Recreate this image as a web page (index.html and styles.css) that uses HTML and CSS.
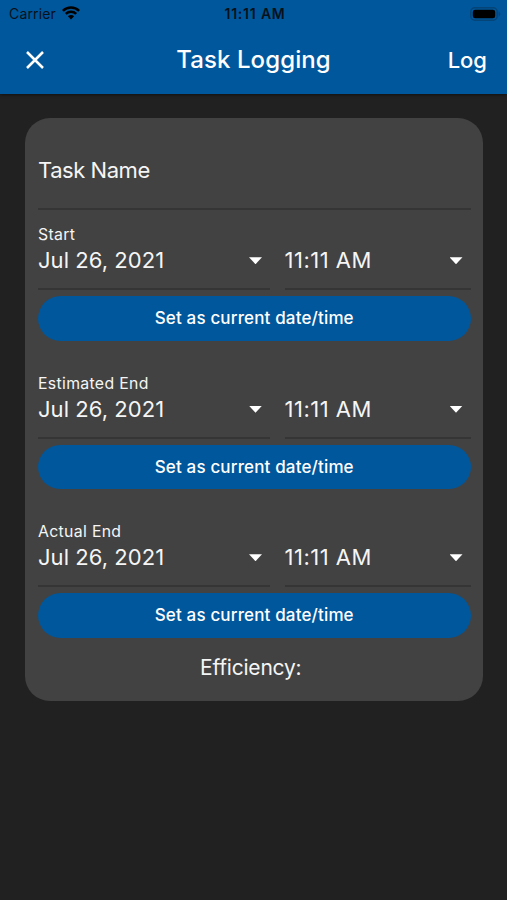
FILE: index.html
```html
<!DOCTYPE html>
<html lang="en">
<head>
<meta charset="utf-8">
<title>Task Logging</title>
<link rel="stylesheet" href="styles.css">
</head>
<body>
<header class="app-bar">
  <div class="status">
    <div class="carrier"><span>Carrier</span>
      <svg width="18" height="14" viewBox="0 0 18 14" fill="none" stroke="currentColor" stroke-width="2.5"><path d="M.9 4.8a11.5 11.5 0 0 1 16.2 0M3.8 7.9a7.4 7.4 0 0 1 10.4 0"/><path d="M5.9 10.2a4.4 4.4 0 0 1 6.2 0L9 13.4z" fill="currentColor" stroke="none"/></svg>
    </div>
    <time class="clock">11:11 AM</time>
    <svg class="battery" width="31" height="14" viewBox="0 0 31 14"><rect x=".8" y=".8" width="26.4" height="12.4" rx="4" fill="none" stroke="#044477" stroke-width="1.4"/><rect x="2.8" y="2.7" width="22.4" height="8.6" rx="2.3"/><path d="M28.7 4.6q1.6.8 1.6 2.4t-1.6 2.4z" fill="#044477"/></svg>
  </div>
  <nav class="toolbar">
    <svg class="close" width="18" height="18" viewBox="0 0 18 18" fill="none" stroke="currentColor" stroke-width="2.5"><path d="M1 1l16 16M17 1L1 17"/></svg>
    <h1 class="title">Task Logging</h1>
    <span class="log">Log</span>
  </nav>
</header>
<main class="card">
  <div class="task-name"><span>Task Name</span></div>
  <section class="group">
    <div class="label"><span>Start</span></div>
    <div class="fields">
      <div class="field"><span class="date">Jul 26, 2021</span><i class="arrow"></i></div>
      <div class="field"><span class="time">11:11 AM</span><i class="arrow"></i></div>
    </div>
    <div class="button"><span>Set as current date/time</span></div>
  </section>
  <section class="group">
    <div class="label"><span>Estimated End</span></div>
    <div class="fields">
      <div class="field"><span class="date">Jul 26, 2021</span><i class="arrow"></i></div>
      <div class="field"><span class="time">11:11 AM</span><i class="arrow"></i></div>
    </div>
    <div class="button"><span>Set as current date/time</span></div>
  </section>
  <section class="group">
    <div class="label"><span>Actual End</span></div>
    <div class="fields">
      <div class="field"><span class="date">Jul 26, 2021</span><i class="arrow"></i></div>
      <div class="field"><span class="time">11:11 AM</span><i class="arrow"></i></div>
    </div>
    <div class="button"><span>Set as current date/time</span></div>
  </section>
  <div class="efficiency"><span>Efficiency:</span></div>
</main>
</body>
</html>
```
FILE: styles.css
```css
* { box-sizing: border-box; }
body {
  margin: 0;
  height: 900px;
  overflow: hidden;
  background: #212121;
  color: #f5f5f5;
  font-family: Inter, "Liberation Sans", sans-serif;
  white-space: nowrap;
}
.app-bar {
  height: 94px;
  background: #01579b;
  box-shadow: 0 1px 3px rgba(0, 0, 0, .5);
}
.status {
  display: grid;
  grid-template-columns: 1fr auto 1fr;
  align-items: center;
  height: 27px;
  padding: 0 6px 0 9px;
  color: #06111c;
}
.carrier {
  display: flex;
  align-items: center;
  gap: 6px;
  font-size: 14px;
  letter-spacing: .15px;
  line-height: 27px;
}
.carrier svg { color: #000; margin-top: -2px; }
.clock { font-size: 14px; font-weight: 600; letter-spacing: .8px; }
.battery { justify-self: end; }
.toolbar {
  display: grid;
  grid-template-columns: 1fr auto 1fr;
  align-items: center;
  height: 66px;
  padding: 0 20px;
  color: #fff;
}
.close { margin-left: 6px; }
.title { margin: 0; font-size: 24px; font-weight: 500; letter-spacing: .1px; line-height: 30px; }
.log { justify-self: end; font-size: 22px; font-weight: 500; }
.card {
  width: 457.5px;
  height: 582.5px;
  margin: 24.3px 0 0 25px;
  padding: 0 12px 0 13px;
  border-radius: 25px;
  background: #424242;
}
.task-name {
  height: 92px;
  padding-top: 38px;
  border-bottom: 2px solid #353535;
  font-size: 22px;
  letter-spacing: -.45px;
  line-height: 28px;
}
.group { height: 148.5px; padding-top: 14px; }
.label { height: 20px; font-size: 15.8px; letter-spacing: .33px; line-height: 21px; }
.fields { display: grid; grid-template-columns: 232px 186px; justify-content: space-between; }
.field {
  display: flex;
  justify-content: space-between;
  height: 46px;
  padding: 3px 8px 0 0;
  border-bottom: 2px solid #353535;
  font-size: 22px;
  line-height: 27px;
}
.date { letter-spacing: .05px; }
.time { letter-spacing: .5px; }
.arrow {
  width: 13px;
  height: 7px;
  margin-top: 10px;
  background: #fff;
  clip-path: polygon(0 0, 100% 0, 50% 100%);
}
.button {
  height: 44.5px;
  margin-top: 6px;
  border-radius: 23px;
  background: #01579b;
  color: #fff;
  font-size: 17px;
  font-weight: 550;
  letter-spacing: .15px;
  line-height: 45px;
  text-align: center;
}
.efficiency { padding-right: 7px; font-size: 21px; letter-spacing: -.2px; line-height: 24px; text-align: center; }
```
